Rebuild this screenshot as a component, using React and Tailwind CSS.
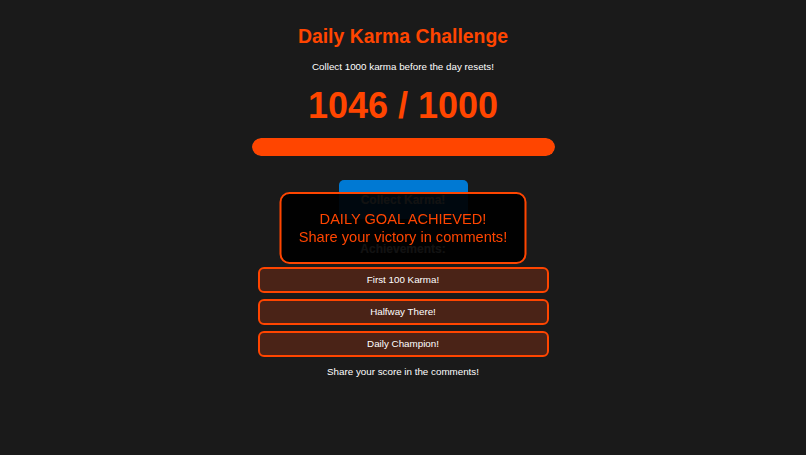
import React from "react";

const achievements = ["First 100 Karma!", "Halfway There!", "Daily Champion!"];

export default function App() {
  const karma = 1046;
  const goal = 1000;
  const pct = Math.min(100, (karma / goal) * 100);

  return (
    <div className="min-h-[455px] bg-[#1a1a1a] text-white font-['Liberation_Sans',Arial,sans-serif]">
      <div className="flex flex-col items-center pt-[24px]">
        <h1 className="text-[19.4px] leading-[24px] font-bold text-[#ff4500]">
          Daily Karma Challenge
        </h1>
        <p className="mt-[12px] text-[9.8px] leading-[13px] text-white">
          Collect 1000 karma before the day resets!
        </p>
        <div className="mt-[12px] text-[36px] leading-[42px] font-bold text-[#ff4500]">
          {karma} / {goal}
        </div>
        <div className="mt-[11px] w-[303px] h-[18px] rounded-full bg-[#333] overflow-hidden">
          <div className="h-full rounded-full bg-[#ff4500]" style={{ width: `${pct}%` }} />
        </div>
        <button className="mt-[24px] w-[129px] h-[39px] rounded-[5px] bg-[#0079d3] text-white text-[12px] font-bold">
          Collect Karma!
        </button>
        <h2 className="mt-[22px] text-[12px] leading-[16px] font-bold text-white">
          Achievements:
        </h2>
        <div className="mt-[10px] flex flex-col gap-[6px] w-[291px]">
          {achievements.map((a) => (
            <div
              key={a}
              className="h-[26px] flex items-center justify-center rounded-[6px] border-2 border-[#ff4500] bg-[#4a2317] text-[9.8px] text-white"
            >
              {a}
            </div>
          ))}
        </div>
        <p className="mt-[8px] text-[9.8px] leading-[13px] text-white">
          Share your score in the comments!
        </p>
      </div>

      <div className="fixed left-1/2 top-1/2 -translate-x-1/2 -translate-y-1/2 w-[247px] h-[72px] flex flex-col items-center justify-center rounded-[10px] border-2 border-[#ff4500] bg-black/[0.93] text-[#ff4500] text-[14.6px] leading-[18px]">
        <div>DAILY GOAL ACHIEVED!</div>
        <div>Share your victory in comments!</div>
      </div>
    </div>
  );
}
